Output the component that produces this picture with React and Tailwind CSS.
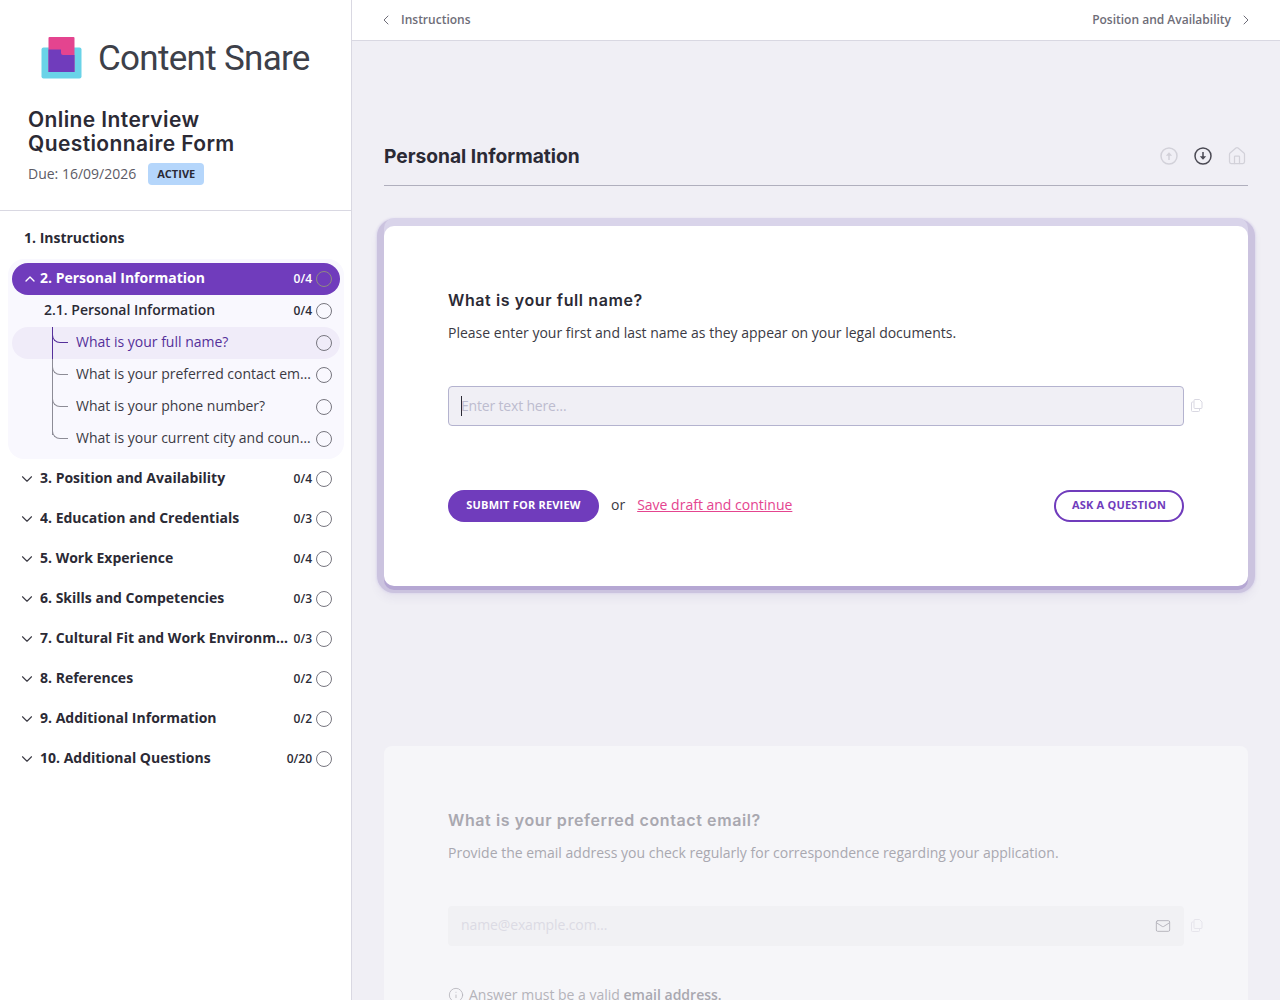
import React from "react";
import { ChevronDown, ChevronLeft, ChevronRight, ChevronUp, House, Info, Mail } from "lucide-react";

const sections = [
  { label: "3. Position and Availability", count: "0/4" },
  { label: "4. Education and Credentials", count: "0/3" },
  { label: "5. Work Experience", count: "0/4" },
  { label: "6. Skills and Competencies", count: "0/3" },
  { label: "7. Cultural Fit and Work Environment", count: "0/3" },
  { label: "8. References", count: "0/2" },
  { label: "9. Additional Information", count: "0/2" },
  { label: "10. Additional Questions", count: "0/20" },
];

const questions = [
  { label: "What is your full name?", active: true },
  { label: "What is your preferred contact email?" },
  { label: "What is your phone number?" },
  { label: "What is your current city and country?", last: true },
];

function Logo() {
  return (
    <svg width="42" height="44" viewBox="0 0 42 44" className="shrink-0">
      <rect x="0.5" y="11.500" width="40" height="31" rx="2" fill="#6ad3e8" />
      <path d="M7.500 2a1 1 0 0 1 1-1h24a1 1 0 0 1 1 1v34h-26z" fill="#e4448f" />
      <path d="M7.500 13.500h12.500v3.500a2 2 0 0 0 2 2h11.500v17h-26z" fill="#703cbc" />
    </svg>
  );
}

function CopyIcon({ className }) {
  return (
    <svg width="14" height="15" viewBox="0 0 14 15" fill="none" stroke="currentColor" strokeWidth="1" className={className}>
      <path d="M5 1.500h4.500l2.500 2.500v5.500a1 1 0 0 1-1 1h-6a1 1 0 0 1-1-1v-7a1 1 0 0 1 1-1z" />
      <path d="M3.500 4h-1a1 1 0 0 0-1 1v7.500a1 1 0 0 0 1 1h6a1 1 0 0 0 1-1v-1.500" />
    </svg>
  );
}

function ArrowCircle({ down, className }) {
  return (
    <svg width="18" height="18" viewBox="0 0 18 18" fill="none" stroke="currentColor" className={className}>
      <circle cx="9" cy="9" r="8" strokeWidth="1.500" />
      {down ? (
        <>
          <path d="M9 5v6" strokeWidth="1.500" />
          <path d="M5.800 9.200h6.400L9 12.800z" fill="currentColor" stroke="none" />
        </>
      ) : (
        <>
          <path d="M9 13V7" strokeWidth="1.500" />
          <path d="M5.800 8.800h6.400L9 5.200z" fill="currentColor" stroke="none" />
        </>
      )}
    </svg>
  );
}

function Circle({ className = "border-[#77767f]" }) {
  return <span className={`block size-4 shrink-0 rounded-full border ${className}`} />;
}

function Question({ label, active, last }) {
  return (
    <div className={`relative flex h-8 items-center rounded-2xl pr-2 pl-16 ${active ? "bg-[#f0ecf9] text-[#55309a]" : "text-[#3b3a44]"}`}>
      <span className={`absolute left-10 top-0 w-px ${active ? "bg-[#55309a]" : "bg-[#8d8c96]"} ${last ? "h-3" : "h-8"}`} />
      <span className={`absolute left-10 top-2 h-2 w-4 rounded-bl-lg border-b border-l ${active ? "border-[#55309a]" : "border-[#8d8c96]"}`} />
      <span className="min-w-0 flex-1 truncate pb-[2px] text-sm">{label}</span>
      <span className="ml-1"><Circle /></span>
    </div>
  );
}

function Sidebar() {
  return (
    <aside className="h-full w-[352px] shrink-0 border-r border-[#d9d8e2] bg-white">
      <div className="h-[211px] border-b border-[#d9d8e2] px-7">
        <div className="flex items-center gap-[15px] pt-9 pl-[13px]">
          <Logo />
          <span className="pt-[2px] font-['Roboto'] text-[35px] leading-[42px] tracking-[-0.7px] text-[#3d4049]">Content Snare</span>
        </div>
        <h1 className="mt-[28px] font-['Inter'] text-[21px] leading-6 font-semibold tracking-[0.4px] text-[#2b2a35]">Online Interview Questionnaire Form</h1>
        <div className="mt-[7px] flex items-center gap-3">
          <span className="text-sm text-[#5c5b66]">Due: 16/09/2026</span>
          <span className="flex h-[22px] w-14 items-center justify-center rounded-sm bg-[#b5d6fb] text-[11px] font-bold text-[#2b2a35]">ACTIVE</span>
        </div>
      </div>
      <nav className="pt-[7px]">
        <div className="flex h-10 items-center pl-6 text-sm font-bold text-[#2b2a35]">1. Instructions</div>
        <div className="mt-px mr-[7px] ml-2 rounded-2xl bg-[#f9f8fe] p-1">
          <div className="flex h-8 items-center rounded-2xl bg-[#703cbc] pr-2 pl-[10px] text-white">
            <ChevronUp size={16} strokeWidth={2} className="mr-[2px] shrink-0" />
            <span className="flex-1 truncate pb-[2px] text-sm font-bold">2. Personal Information</span>
            <span className="mr-1 text-xs font-semibold">0/4</span>
            <Circle className="border-[#8f8a80]" />
          </div>
          <div className="flex h-8 items-center pr-2 pl-8 text-[#2b2a35]">
            <span className="flex-1 truncate pb-[2px] text-sm font-semibold">2.1. Personal Information</span>
            <span className="mr-1 text-xs font-semibold">0/4</span>
            <Circle />
          </div>
          {questions.map((q) => (
            <Question key={q.label} {...q} />
          ))}
        </div>
        {sections.map((s) => (
          <div key={s.label} className="flex h-10 items-center pr-[19px] pl-[18px] text-[#2b2a35]">
            <ChevronDown size={18} strokeWidth={1.500} className="mr-1 shrink-0 text-[#3b3a44]" />
            <span className="min-w-0 flex-1 truncate pb-[2px] text-sm font-bold">{s.label}</span>
            <span className="mr-1 ml-1 text-xs font-semibold">{s.count}</span>
            <Circle />
          </div>
        ))}
      </nav>
    </aside>
  );
}

function TopBar() {
  return (
    <div className="flex h-[41px] shrink-0 items-center justify-between border-b border-[#d9d8e2] bg-white px-[26px] text-xs font-semibold text-[#6e6d78]">
      <div className="flex items-center gap-[7px]">
        <ChevronLeft size={16} strokeWidth={1.500} />
        <span>Instructions</span>
      </div>
      <div className="flex items-center gap-[7px]">
        <span>Position and Availability</span>
        <ChevronRight size={16} strokeWidth={1.500} />
      </div>
    </div>
  );
}

function ActiveCard() {
  return (
    <div className="h-[360px] rounded-[10px] bg-white px-16 pt-[63px] shadow-[0_4px_0_0_#b5a7d3,0_-8px_0_0_#d9d4ea,0_0_0_7px_#cbc3df,0_0_2px_8px_#dedaed,0_6px_8px_7px_rgba(80,60,130,0.06)]">
      <h3 className="font-['Inter'] text-base leading-[22px] font-semibold tracking-[0.6px] text-[#2b2a35]">What is your full name?</h3>
      <p className="mt-3 text-sm leading-5 text-[#3b3a44]">Please enter your first and last name as they appear on your legal documents.</p>
      <div className="relative mt-[43px] flex items-center">
        <input
          readOnly
          placeholder="Enter text here…"
          className="h-10 w-[736px] shrink-0 rounded border border-[#b4b3cf] bg-[#f0eff5] px-3 pb-[2px] text-sm tracking-[-0.18px] text-[#2b2a35] outline-none placeholder:text-[#bdbccf]"
        />
        <span className="absolute top-[10px] left-[13px] h-[20px] w-px bg-[#2b2a35]" />
        <CopyIcon className="ml-[6px] -mt-[2px] shrink-0 text-[#d9d8e2]" />
      </div>
      <div className="mt-16 flex w-[736px] items-center">
        <button className="h-8 w-[151px] rounded-full bg-[#703cbc] pb-[2px] text-[11px] font-bold tracking-[0.2px] text-white">SUBMIT FOR REVIEW</button>
        <span className="ml-3 pb-[2px] text-sm text-[#3b3a44]">or</span>
        <a className="ml-3 pb-[2px] text-sm text-[#e4448f] underline">Save draft and continue</a>
        <button className="ml-auto h-8 w-[130px] rounded-full border-2 border-[#703cbc] pb-[2px] text-[11px] font-bold tracking-[0.2px] text-[#703cbc]">ASK A QUESTION</button>
      </div>
    </div>
  );
}

function NextCard() {
  return (
    <div className="mt-40 h-[400px] rounded-lg bg-[#f6f6f9] px-16 pt-[63px]">
      <h3 className="font-['Inter'] text-base leading-[22px] font-semibold tracking-[0.6px] text-[#a9a8b0]">What is your preferred contact email?</h3>
      <p className="mt-3 text-sm leading-5 text-[#a9a8b0]">Provide the email address you check regularly for correspondence regarding your application.</p>
      <div className="mt-[43px] flex items-center">
        <div className="flex h-10 w-[736px] shrink-0 items-center justify-between rounded bg-[#f1f1f4] pr-[13px] pl-[13px] text-sm text-[#dcdbe4]">
          <span className="pb-[2px] tracking-[-0.12px]">name@example.com…</span>
          <Mail size={16} strokeWidth={1.500} className="text-[#b8b7bf]" />
        </div>
        <CopyIcon className="ml-[6px] -mt-[2px] shrink-0 text-[#e6e5ec]" />
      </div>
      <p className="mt-[39px] flex items-center gap-[5px] text-sm text-[#b4b3ba]">
        <Info size={16} strokeWidth={1.250} />
        <span>Answer must be a valid <span className="font-semibold text-[#a9a8b0]">email address.</span></span>
      </p>
    </div>
  );
}

export default function App() {
  return (
    <div className="flex h-screen overflow-hidden bg-[#f0eff5] font-['Open_Sans',sans-serif]">
      <Sidebar />
      <main className="flex min-w-0 flex-1 flex-col overflow-hidden">
        <TopBar />
        <div className="px-8">
          <div className="mt-[89px] flex h-14 items-center justify-between border-b border-[#b0afbd] pb-[2px]">
            <h2 className="font-['Inter'] text-[19.200px] font-bold text-[#2b2a35]">Personal Information</h2>
            <div className="mr-px flex items-center gap-[14px] pb-[2px]">
              <span className="flex size-5 items-center justify-center"><ArrowCircle className="text-[#d2d1d9]" /></span>
              <span className="flex size-5 items-center justify-center"><ArrowCircle down className="text-[#4a4953]" /></span>
              <House size={20} strokeWidth={1.500} className="text-[#d2d1d9]" />
            </div>
          </div>
          <div className="mt-10">
            <ActiveCard />
            <NextCard />
          </div>
        </div>
      </main>
    </div>
  );
}
